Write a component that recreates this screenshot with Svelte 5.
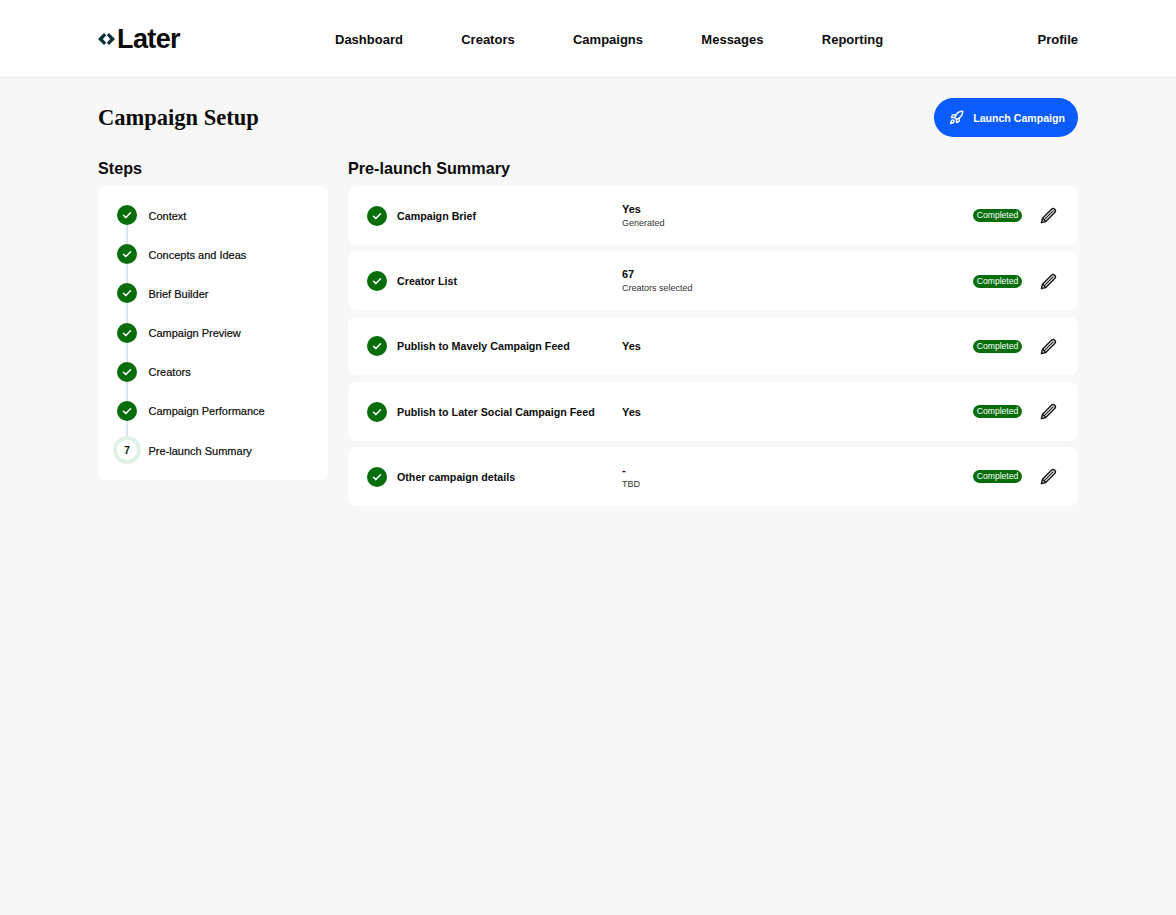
<script lang="ts">
    const navItems = ["Dashboard", "Creators", "Campaigns", "Messages", "Reporting"];

    const steps = [
        "Context",
        "Concepts and Ideas",
        "Brief Builder",
        "Campaign Preview",
        "Creators",
        "Campaign Performance",
    ];

    const rows = [
        { title: "Campaign Brief", value: "Yes", note: "Generated" },
        { title: "Creator List", value: "67", note: "Creators selected" },
        { title: "Publish to Mavely Campaign Feed", value: "Yes", note: "" },
        { title: "Publish to Later Social Campaign Feed", value: "Yes", note: "" },
        { title: "Other campaign details", value: "-", note: "TBD" },
    ];
</script>

{#snippet check()}
    <span class="check">
        <svg viewBox="0 0 20 20" width="20" height="20" fill="none" stroke="#fff" stroke-width="1.5" stroke-linecap="round" stroke-linejoin="round">
            <path d="M6.500 10.300l2.400 2.300 4.600-4.800" />
        </svg>
    </span>
{/snippet}

<header class="topbar">
    <div class="logo">
        <svg viewBox="0 0 17 12" width="17" height="12" fill="#0b2f3a">
            <path d="M6 0 0 6l6 6 2.200-2.200L4.800 6l3.400-3.800z" />
            <path d="M11 0l6 6-6 6-2.200-2.200L12.200 6 8.800 2.200z" />
        </svg>
        <span>Later</span>
    </div>
    <nav class="nav">
        {#each navItems as item}
            <span>{item}</span>
        {/each}
    </nav>
    <span class="profile">Profile</span>
</header>

<main class="page">
    <div class="title-row">
        <h1>Campaign Setup</h1>
        <button class="launch">
            <svg viewBox="0 0 24 24" width="15" height="15" fill="none" stroke="#fff" stroke-width="2.300" stroke-linecap="round" stroke-linejoin="round">
                <path d="M4.500 16.500c-1.500 1.260-2 5-2 5s3.740-.5 5-2c.71-.84.7-2.130-.09-2.910a2.180 2.180 0 0 0-2.910-.09z" />
                <path d="m12 15-3-3a22 22 0 0 1 2-3.950A12.880 12.880 0 0 1 22 2c0 2.720-.78 7.500-6 11a22.350 22.350 0 0 1-4 2z" />
                <path d="M9 12H4s.55-3.030 2-4c1.620-1.080 5 0 5 0" />
                <path d="M12 15v5s3.030-.55 4-2c1.080-1.620 0-5 0-5" />
            </svg>
            Launch Campaign
        </button>
    </div>

    <div class="columns">
        <section class="steps-col">
            <h2>Steps</h2>
            <div class="card steps">
                {#each steps as step}
                    <div class="step">
                        {@render check()}
                        <span class="step-label">{step}</span>
                    </div>
                {/each}
                <div class="step">
                    <span class="current">7</span>
                    <span class="step-label">Pre-launch Summary</span>
                </div>
            </div>
        </section>

        <section class="summary-col">
            <h2>Pre-launch Summary</h2>
            <div class="rows">
                {#each rows as row}
                    <div class="card row">
                        {@render check()}
                        <span class="row-title">{row.title}</span>
                        <div class="row-value">
                            <strong>{row.value}</strong>
                            {#if row.note}
                                <small>{row.note}</small>
                            {/if}
                        </div>
                        <span class="badge">Completed</span>
                        <svg class="pencil" viewBox="0 0 24 24" width="19" height="19" fill="none" stroke="#1a1a1a" stroke-width="1.900" stroke-linejoin="round" stroke-linecap="round">
                            <path d="M4.500 15.500 15.800 4.200a2.800 2.800 0 0 1 4 4L8.500 19.500 3 21z" />
                            <path d="M6.500 17.500 17.800 6.200" stroke-width="1.500" />
                            <path d="M4.500 15.500l4 4" stroke-width="1.500" />
                        </svg>
                    </div>
                {/each}
            </div>
        </section>
    </div>
</main>

<style>
    :global(body) {
        margin: 0;
        background: #f7f7f7;
        font-family: "Liberation Sans", Arial, sans-serif;
        color: #0b0b0b;
    }

    .topbar {
        display: flex;
        align-items: center;
        height: 75px;
        padding: 2px 98px 0;
        background: #fff;
        border-bottom: 1px solid #e8ebee;
    }

    .logo {
        display: flex;
        align-items: center;
        gap: 2px;
        width: 237px;
        font-size: 27px;
        font-weight: 700;
        letter-spacing: -0.6px;
    }

    .logo svg {
        margin-top: -2px;
    }

    .nav {
        display: flex;
        gap: 58.300px;
        flex: 1;
        font-size: 13px;
        font-weight: 700;
    }

    .profile {
        font-size: 13px;
        font-weight: 700;
    }

    .page {
        padding: 20px 98px 0;
    }

    .title-row {
        display: flex;
        align-items: center;
        justify-content: space-between;
        height: 39px;
    }

    h1 {
        margin: 0;
        font-family: "Liberation Serif", serif;
        font-size: 22.500px;
        font-weight: 700;
    }

    .launch {
        display: flex;
        align-items: center;
        gap: 9px;
        height: 39px;
        padding: 0 13px 0 15px;
        background: #0a5cff;
        color: #fff;
        border: none;
        border-radius: 20px;
        font: 700 10.600px "Liberation Sans", Arial, sans-serif;
    }

    .columns {
        display: flex;
        gap: 20px;
        margin-top: 21px;
    }

    h2 {
        margin: 0 0 8px;
        font-size: 16.200px;
        line-height: 20px;
        font-weight: 700;
    }

    .steps-col {
        width: 230px;
    }

    .summary-col {
        flex: 1;
    }

    .card {
        background: #fff;
        border-radius: 8px;
    }

    .steps {
        display: flex;
        flex-direction: column;
        gap: 19.200px;
        padding: 19px 20px 20px 19px;
    }

    .step {
        position: relative;
        display: flex;
        align-items: center;
        gap: 11.500px;
        height: 20px;
        font-size: 11px;
    }

    .step-label {
        padding-top: 1px;
        -webkit-text-stroke: 0.2px #0b0b0b;
    }

    .step:not(:last-child)::after {
        content: "";
        position: absolute;
        left: 9px;
        top: 20px;
        width: 1.500px;
        height: 20px;
        background: #dbe3ee;
    }

    .check {
        display: flex;
        flex-shrink: 0;
        width: 20px;
        height: 20px;
        border-radius: 50%;
        background: #056e0a;
    }

    .current {
        display: flex;
        align-items: center;
        justify-content: center;
        box-sizing: border-box;
        flex-shrink: 0;
        width: 28px;
        height: 28px;
        margin: 0 -4px;
        border: 4px solid #dff1e6;
        border-radius: 50%;
        background: #fff;
        font-weight: 700;
        font-size: 10px;
    }

    .rows {
        display: flex;
        flex-direction: column;
        gap: 6.500px;
    }

    .row {
        display: flex;
        align-items: center;
        box-sizing: border-box;
        height: 58.800px;
        padding: 0.800px 20px 0 19px;
    }

    .row-title {
        width: 225px;
        margin-left: 10px;
        font-size: 10.700px;
        font-weight: 700;
    }

    .row-value {
        display: flex;
        flex-direction: column;
        flex: 1;
    }

    .row-value strong {
        font-size: 11px;
        line-height: 14px;
    }

    .row-value small {
        font-size: 9px;
        line-height: 14px;
        color: #333;
    }

    .badge {
        padding: 0 3.700px;
        height: 13px;
        line-height: 13px;
        border-radius: 7px;
        background: #056e0a;
        color: #fff;
        font-size: 8.600px;
    }

    .pencil {
        margin-left: 17px;
    }
</style>
